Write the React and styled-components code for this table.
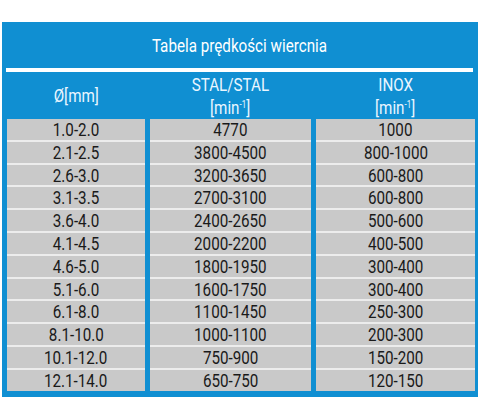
import React from 'react';
import styled, { createGlobalStyle } from 'styled-components';

const GlobalStyle = createGlobalStyle`
  body {
    margin: 0;
    background: #ffffff;
    font-family: Roboto, "Liberation Sans", sans-serif;
  }
`;

const BLUE = '#108fd2';

const Table = styled.div`
  width: 476px;
  margin: 22px 0 0 2px;
  background-color: ${BLUE};
  padding: 0 3px 6px 5px;
  box-sizing: border-box;
`;

const Title = styled.div`
  height: 46px;
  display: flex;
  align-items: center;
  justify-content: center;
  color: #ffffff;
  font-size: 19px;
  border-bottom: 4px solid #ffffff;
  margin: 0 2px 0 -1px;
`;

const Narrow = styled.span`
  display: inline-block;
  transform: scaleX(${p => p.$scale || 0.8});
  white-space: nowrap;
`;

const Grid = styled.div`
  display: grid;
  grid-template-columns: 138px 161px 1fr;
  column-gap: 5px;
`;

const Head = styled.div`
  height: 47px;
  display: flex;
  flex-direction: column;
  align-items: center;
  justify-content: center;
  color: #eaf6ff;
  font-size: 19px;
  line-height: 23px;
`;

const Sup = styled.sup`
  font-size: 10px;
  vertical-align: 6px;
  line-height: 0;
`;

const Cell = styled.div`
  height: 20.8px;
  background-color: #c9c9c9;
  color: #1a1a1a;
  font-size: 19px;
  line-height: 21px;
  text-align: center;
  border-top: 2px solid #ececec;

  &:nth-child(-n + 3) {
    border-top: none;
  }
`;

const rows = [
  ['1.0-2.0', '4770', '1000'],
  ['2.1-2.5', '3800-4500', '800-1000'],
  ['2.6-3.0', '3200-3650', '600-800'],
  ['3.1-3.5', '2700-3100', '600-800'],
  ['3.6-4.0', '2400-2650', '500-600'],
  ['4.1-4.5', '2000-2200', '400-500'],
  ['4.6-5.0', '1800-1950', '300-400'],
  ['5.1-6.0', '1600-1750', '300-400'],
  ['6.1-8.0', '1100-1450', '250-300'],
  ['8.1-10.0', '1000-1100', '200-300'],
  ['10.1-12.0', '750-900', '150-200'],
  ['12.1-14.0', '650-750', '120-150'],
];

const Unit = () => (
  <Narrow>
    [min<Sup>-1</Sup>]
  </Narrow>
);

export default function App() {
  return (
    <>
      <GlobalStyle />
      <Table>
        <Title>
          <Narrow>Tabela prędkości wiercnia</Narrow>
        </Title>
        <Grid>
          <Head>
            <Narrow>Ø[mm]</Narrow>
          </Head>
          <Head>
            <Narrow>STAL/STAL</Narrow>
            <Unit />
          </Head>
          <Head>
            <Narrow>INOX</Narrow>
            <Unit />
          </Head>
        </Grid>
        <Grid>
          {rows.map(r =>
            r.map((v, i) => (
              <Cell key={r[0] + i}>
                <Narrow>{v}</Narrow>
              </Cell>
            ))
          )}
        </Grid>
      </Table>
    </>
  );
}
